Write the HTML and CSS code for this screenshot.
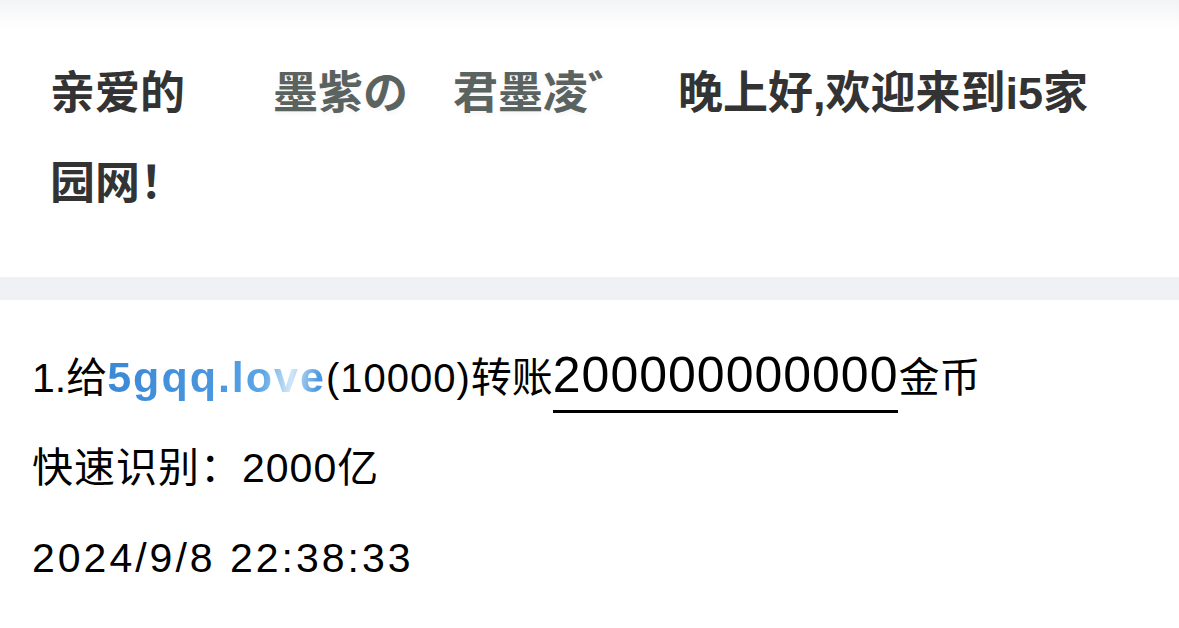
FILE: index.html
```html
<!DOCTYPE html>
<html lang="zh-CN">
<head>
    <meta charset="UTF-8">
    <meta name="viewport" content="width=device-width, initial-scale=1.0">
    <title>转账记录</title>

    <link rel="stylesheet" href="styles.css">
</head>
<body>

    <div class="hello">
        <p class="hello-text"><span class="dear">亲爱的</span><span class="nick">墨紫の</span><span class="nick">君墨凌゛</span><span class="welcome">晚上好,欢迎来到i5家</span><span>园网！</span></p>
    </div>

    <div class="divider"></div>

    <div class="record">
        <div class="row"><span>1.给</span><span class="user">5gqq.love</span><span class="uid">(10000)</span><span>转账</span><span class="amount">200000000000</span><span>金币</span></div>
        <div class="row row-big">快速识别：2000亿</div>
        <div class="row row-big row-time">2024/9/8 22:38:33</div>
    </div>

</body>
</html>
```

FILE: styles.css
```css
body{
    margin: 0;
    background: white;
    font-family: "Liberation Sans", "Noto Sans CJK SC", sans-serif;
    color: #000;
}
.hello
{
    background: linear-gradient(#f3f4f6, #fff 30px);
    padding: 49px 60px 48px 50px;
}
.hello-text
{
    margin: 0;
    font-size: 45px;
    font-weight: bold;
    line-height: 90px;
    color: #333;
}
.nick
{
    margin-left: 45px;
    color: #5b6360;
    text-shadow: 0 3px 4px rgba(0, 0, 0, 0.04);
}
.dear + .nick
{
    margin-left: 88px;
}
.welcome
{
    margin-left: 45px;
}
.divider
{
    height: 23px;
    background: #f0f1f4;
}
.record
{
    padding: 33px 32px 31px 32px;
}
.row
{
    font-size: 41px;
    line-height: 90px;
}
.row-big
{
    letter-spacing: 1px;
}
.row-time
{
    letter-spacing: 3px;
}
.user
{
    font-size: 43px;
    font-weight: bold;
    letter-spacing: 2px;
    line-height: 1;
    background: linear-gradient(100deg, #3a88d6 0%, #4a97df 50%, #5aa5e6 70%, #cfe5f7 83%, #4d9ae0 95%, #3f8fdc 100%);
    -webkit-background-clip: text;
    background-clip: text;
    color: transparent;
}
.uid
{
    font-size: 40px;
    letter-spacing: 1px;
}
.amount
{
    font-size: 50px;
    letter-spacing: 1px;
    line-height: 1;
    padding-bottom: 7px;
    border-bottom: 3px solid #000;
}
```
